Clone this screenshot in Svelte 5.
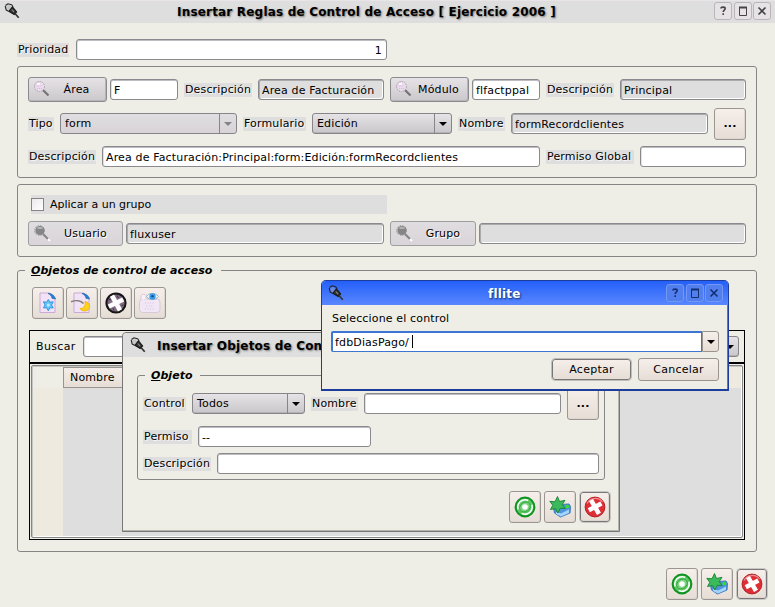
<script>
  const tools = ['new', 'edit', 'lens', 'view'];
  const actions = ['accept', 'next', 'cancel'];
</script>

{#snippet mag(off)}
  <svg class="mag" width="18" height="18" viewBox="0 0 18 18">
    {#if off}
      <path d="M11 11l5 5" stroke="#fff" stroke-width="2" transform="translate(1 1)" />
      <path d="M10 10l5 5" stroke="#858585" stroke-width="2.2" />
      <circle cx="7" cy="6.5" r="4.6" fill="#858585" /><circle cx="6.5" cy="6.5" r="4.8" fill="none" stroke="#8d8d8d" stroke-dasharray="1.5 1" />
      <path d="M4.5 4h5" stroke="#ddd" />
    {:else}
      <path d="M10 10l5.5 5.5" stroke="#77727a" stroke-width="2.2" />
      <circle cx="6.5" cy="6.5" r="5" fill="#eadcec" stroke="#aaa2ad" stroke-dasharray="1.5 .8" />
      <path d="M3.5 6h6M4 8.5h5" stroke="#dfafe2" stroke-dasharray="1 1" /><path d="M4 4h3" stroke="#fff" stroke-width="1.5" />
    {/if}
  </svg>
{/snippet}

{#snippet plug()}
  <svg class="plug" width="16" height="17" viewBox="0 0 16 17">
    <path d="M1.5 2.5L4 .8l3.5 1M1.2 3l1 4M2 7l2.6 1.2M7.5 1.5l1.6 2.2" fill="none" stroke="#222" stroke-width="1.1" />
    <path d="M2.5 2.8l3-.8L8 4.6 4.4 7.4 2.6 6z" fill="#aaa" fill-opacity=".45" />
    <path d="M8.400 4l4.100 5-2.300 2.400L5 8.400z" fill="#3a3a3a" stroke="#1c1c1c" stroke-width="1.300" />
    <path d="M8 6.500l2 2.500" stroke="#999" /><path d="M11 10.5l3.700 4.200" stroke="#333" stroke-width="1.700" />
  </svg>
{/snippet}

{#snippet wb(kind)}
  <span class="wb">
    <svg width="18" height="18" viewBox="0 0 18 18" fill="none" stroke="currentColor">
      {#if kind === 'max'}<path d="M5.5 6v7.5h7V6" /><path d="M5 5.5h8" stroke-width="2" />
      {:else if kind === 'x'}<path d="M5.500 5.500l7 7M12.500 5.500l-7 7" stroke-width="1.6" />
      {:else}<path d="M7 6.600c0-2 4.200-2 4.200 0 0 1.500-2 1.400-2 3.400M9.200 11.300v1.800" stroke-width="1.600" />{/if}
    </svg>
  </span>
{/snippet}

{#snippet combo(text, w, cls)}
  <div class="combo {cls}" style="width:{w}px"><span>{text}</span><i><b></b></i></div>
{/snippet}

{#snippet icon(k)}
  <svg width="22" height="22" viewBox="0 0 22 22">
    {#if k === 'accept'}
      <circle cx="11" cy="11" r="9.400" fill="#5cc763" stroke="#0f9220" stroke-width="2" />
      <circle cx="11" cy="11" r="7.200" fill="none" stroke="#fff" stroke-width="1.500" stroke-dasharray="17 5.600" transform="rotate(160 11 11)" />
      <ellipse cx="11" cy="11" rx="5.600" ry="4.500" fill="#7fd285" stroke="#27a334" stroke-width=".8" transform="rotate(-35 11 11)" />
      <circle cx="11" cy="11" r="2.800" fill="#fff" />
    {:else if k === 'next'}
      <path d="M4.500 12l6.500-3.500 9-.500 1.500 2.500-.500 6.500-9.500 4-6-4z" fill="#4f93dc" stroke="#3f78bb" />
      <path d="M7 16l5 1.500 8-4v3.500l-8 3.500-5-2.500z" fill="#a5d5fa" />
      <path d="M8.500.500l2 5 5.500-1.200-2.800 4.300 3 4-5-.3-2.400 4.700-2.300-4.400-5 .900 2.300-4.200L.800 5.300l5.200.500z" fill="#3aba5b" stroke="#168332" stroke-width=".9" />
      <circle cx="18.300" cy="10.500" r="1.700" fill="#35e31a" />
    {:else if k === 'cancel'}
      <circle cx="11" cy="11" r="9.900" fill="#df2f36" stroke="#b01f26" />
      <path d="M3 7.500a9 8.500 0 0 1 15.500-1.500" stroke="#f28d8f" stroke-width="1.200" fill="none" />
      <path d="M7 4.200l8 13.600M4.800 14.200l12.600-6.800" stroke="#fff" stroke-width="4.600" />
    {:else if k === 'lens'}
      <circle cx="11" cy="11" r="9.600" fill="#806c82" stroke="#151515" stroke-width="2" />
      <path d="M7 3.700l8 14.600M3.800 14.500l14.400-7" stroke="#fff" stroke-width="4.600" />
      <path d="M3.500 8l2.500-1M12 3.500l1.500 2.500M18.500 13l-2 .500M9 18.500l-1-2" stroke="#40303f" />
    {:else if k === 'view'}
      <rect x=".500" y="7" width="20.500" height="13.500" rx="3" fill="#f1e6f4" stroke="#d9c8dc" />
      <path d="M2 8V3.500C2 2 7 2 7 3.500V7" fill="#f8f1f9" stroke="#d9c8dc" />
      <path d="M6 11h9M7 14h8M6 17h9" stroke="#d9bfe0" stroke-dasharray="1 1.500" />
      <path d="M7.500 4.500c2-4 9-4 12 0-3 4-9 4-12 0z" fill="#eef8ff" stroke="#98aebd" />
      <circle cx="13.500" cy="4.500" r="3.200" fill="#3a9de8" /><circle cx="13.500" cy="4.300" r="1.200" fill="#17508b" />
    {:else}
      <path d="M3 1h10l5 5v14.500H3z" fill="#f1e2f6" stroke="#caa9d6" />
      <path d="M11 1.500c4 0 6.500 2 7.500 5.500l-3.500-.700c-.500-2.500-1.800-4-4-4.800z" fill="#2382dc" stroke="#2263a6" stroke-width=".7" />
      {#if k === 'new'}
        <path d="M11.300 7.500l1.600 2.700 3.300-.400-1.700 3.200 1.700 2.900-3.300-.100-1.600 3-1.600-3-3.300.1L8.100 13 6.400 9.800l3.300.4z" fill="#61c5f8" stroke="#3397e0" /><circle cx="11.300" cy="13" r="1.500" fill="#bfeaff" />
      {:else}
        <path d="M0 9.800c5-2 10-1 12.500 1.700" fill="none" stroke="#83807c" stroke-width="1.600" />
        <path d="M14 9.500c6 1 6 9 0 9.500-2.500 0-4-.800-5-2.500 3 .500 6-2 5-7z" fill="#ffd21c" stroke="#f1b912" />
      {/if}
    {/if}
  </svg>
{/snippet}

<main>
  <header class="bar main-bar">{@render plug()}<h1 class="t-main">Insertar Reglas de Control de Acceso [ Ejercicio 2006 ]</h1>
    <div class="wbs">{@render wb('?')}{@render wb('max')}{@render wb('x')}</div>
  </header>

  <div class="row prio"><label style="width:52px">Prioridad</label><div class="in right" style="width:311px">1</div></div>

  <section class="box b1">
    <div class="row r1">
      <button class="pick" style="width:79px">{@render mag(false)}<span>Área</span></button>
      <div class="in near" style="width:68px">F</div>
      <label style="width:68px">Descripción</label>
      <div class="in ro" style="width:126px">Area de Facturación</div>
      <button class="pick" style="width:79px">{@render mag(false)}<span>Módulo</span></button>
      <div class="in near" style="width:68px">flfactppal</div>
      <label style="width:68px">Descripción</label>
      <div class="in ro" style="width:126px">Principal</div>
    </div>
    <div class="row r2">
      <label style="width:26px">Tipo</label>{@render combo('form', 177, 'dis')}
      <label style="width:63px">Formulario</label>{@render combo('Edición', 140, '')}
      <label style="width:47px">Nombre</label><div class="in ro" style="width:197px">formRecordclientes</div>
      <button class="sq">...</button>
    </div>
    <div class="row r3">
      <label style="width:68px">Descripción</label><div class="in" style="width:438px">Area de Facturación:Principal:form:Edición:formRecordclientes</div>
      <label style="width:88px">Permiso Global</label><div class="in" style="width:106px"></div>
    </div>
  </section>

  <section class="box b2">
    <div class="check"><i></i><span>Aplicar a un grupo</span></div>
    <div class="row r4">
      <button class="pick off" style="width:95px">{@render mag(true)}<span>Usuario</span></button>
      <div class="in ro near" style="width:258px">fluxuser</div>
      <button class="pick off" style="width:86px">{@render mag(true)}<span>Grupo</span></button>
      <div class="in ro near" style="width:267px"></div>
    </div>
  </section>

  <section class="box b3">
    <h2 style="width:196px"><u>O</u>bjetos de control de acceso</h2>
    <div class="tools">{#each tools as t}<button class="sq">{@render icon(t)}</button>{/each}</div>
    <div class="frame">
      <div class="search"><span>Buscar</span><div class="in"></div>{@render combo('', 60, '')}</div>
      <div class="table">
        <div class="thead"><span></span><b>Nombre</b></div>
        <div class="tbody"></div>
      </div>
    </div>
  </section>

  <footer class="acts">{#each actions as a}<button class="sq {a}">{@render icon(a)}</button>{/each}</footer>

  <div class="win w2">
    <header class="bar">{@render plug()}<h1 class="t-sub">Insertar Objetos de Con</h1></header>
    <section class="box b4">
      <h2 style="width:55px"><u>O</u>bjeto</h2>
      <div class="row s1">
        <label style="width:43px">Control</label>{@render combo('Todos', 113, '')}
        <label style="width:47px">Nombre</label><div class="in" style="width:197px"></div><button class="sq">...</button>
      </div>
      <div class="row s2"><label style="width:49px">Permiso</label><div class="in" style="width:173px">--</div></div>
      <div class="row s3"><label style="width:68px">Descripción</label><div class="in" style="width:382px"></div></div>
    </section>
    <footer class="acts">{#each actions as a}<button class="sq {a}">{@render icon(a)}</button>{/each}</footer>
  </div>

  <div class="win w3">
    <header class="bar blue">{@render plug()}<h1 class="t-dlg">fllite</h1>
      <div class="wbs">{@render wb('?')}{@render wb('max')}{@render wb('x')}</div>
    </header>
    <p>Seleccione el control</p>
    <div class="edit"><div class="in focus">fdbDiasPago/<s></s></div><i><b></b></i></div>
    <div class="btns"><button class="ok">Aceptar</button><button class="no">Cancelar</button></div>
  </div>
</main>

<style>
  :global(body) { margin: 0; background: #eeeee6; }
  main, main * { box-sizing: border-box; }
  main { position: relative; width: 775px; height: 607px; overflow: hidden; background: #eeeee6; color: #000; font: 11px/14px "DejaVu Sans", sans-serif; letter-spacing: .15px; }
  button { font: inherit; letter-spacing: inherit; color: #000; padding: 0; margin: 0; border: 1px solid #8b8685; border-radius: 3px; flex: none; }
  svg { display: block; flex: none; }
  .bar { display: flex; align-items: flex-start; height: 23px; background: #dedede; }
  .bar h1 { margin: 0; font-size: 12px; line-height: 16px; font-weight: bold; white-space: nowrap; letter-spacing: .19px; text-shadow: 1px 1px 2px #777; }
  .main-bar { border-top: 1px solid #e9e4e7; padding: 1px 4px 0 4px; }
  .main-bar .t-main { margin: 2px 0 0 157px; }
  .main-bar .plug { margin-top: 1px; }
  .wbs { display: flex; gap: 2px; margin-left: auto; }
  .wb { width: 18px; height: 18px; border: 1px solid #b9b5b9; border-radius: 3px; background: #e7e2e6; color: #444; display: flex; align-items: center; justify-content: center; }
  .wb:last-child { margin-left: -1px; }
  .wb svg { margin: -1px; }
  .row { display: flex; gap: 6px; align-items: center; }
  label { flex: none; height: 14px; background: #dedede; padding-left: 1px; white-space: nowrap; text-shadow: 1px 1px 0 #f6f6f6; }
  .in { flex: none; height: 21px; border: 1px solid #8a8a8e; border-radius: 3px; background: #fff; padding: 3px 3px 0; line-height: 15px; white-space: nowrap; overflow: hidden; box-shadow: inset 0 1px #bdbdc1, inset 1px 0 #e2e2e4; }
  .in.ro { background: #dedede; box-shadow: inset 0 1px #aaaaad, inset 1px 0 #aaaaad, inset -1px -1px #fff; }
  .in.right { text-align: right; padding-right: 4px; }
  .near { margin-left: -3px; }
  .pick { height: 25px; display: flex; align-items: center; background: linear-gradient(#e6e2e6, #cbc8cb); border-color: #8b8a8e; box-shadow: inset -1px -1px #b7b4b8; }
  .pick span { flex: 1; text-align: center; margin-left: -4px; }
  .pick.off span { margin-left: -2px; }
  .mag { margin-left: 4px; margin-top: -1px; }
  .pick.off { background: linear-gradient(#e0dde0, #d9d4d8); border-color: #a09da1; box-shadow: none; text-shadow: 1px 1px #fff; }
  .combo { flex: none; height: 21px; border: 1px solid #88858a; border-radius: 3px; background: linear-gradient(#e6e3e6, #cac7ca); display: flex; box-shadow: inset 0 -1px #b5b2b5; }
  .combo span { flex: 1; padding: 3px 0 0 4px; line-height: 13px; }
  .combo i { width: 17px; border-left: 1px solid #88858a; display: flex; align-items: center; justify-content: center; }
  .combo b, .edit i b { border: 4px solid transparent; border-top-color: #000; border-bottom: 0; }
  .combo.dis { background: linear-gradient(#e1dee1, #d7d3d7); box-shadow: none; }
  .combo.dis b { border-top-color: #858388; }
  .sq { width: 32px; height: 32px; display: flex; align-items: center; justify-content: center; background: linear-gradient(#f5eeea, #e6ded5); font-weight: bold; border-color: #9b9692; box-shadow: inset -1px -1px #ddd5cf; }
  .prio { margin: 16px 0 0 17px; height: 21px; gap: 7px; }
  .box { border: 1px solid #858585; border-radius: 3px; }
  .b1 { margin: 6px 18px 0 17px; height: 112px; padding: 10px 10px 0; }
  .r1 { height: 25px; }
  .r2 { margin-top: 6px; height: 32px; }
  .r2 label, .r2 .combo, .r2 .in { margin-top: -1px; }
  .r3 { margin-top: 6px; height: 21px; }
  .b2 { margin: 6px 18px 0 17px; height: 73px; padding: 10px 10px 0; }
  .check { width: 356px; height: 19px; margin-left: 3px; background: #dedede; display: flex; align-items: center; }
  .check i { width: 13px; height: 13px; border: 1px solid #858585; background: linear-gradient(135deg, #ede8ed, #fff); }
  .check span { margin-left: 6px; letter-spacing: 0; }
  .r4 { margin-top: 7px; height: 25px; }
  .b3 { margin: 13px 18px 0 17px; height: 282px; }
  h2 { margin: -8px 0 0 7px; padding-left: 6px; height: 16px; line-height: 15px; font-size: 11px; font-style: italic; background: #eeeee6; white-space: nowrap; letter-spacing: .06px; }
  .tools { display: flex; gap: 2px; margin: 8px 0 0 14px; }
  .frame { margin: 11px 11px 0; height: 210px; border: 1px solid #000; }
  .search { height: 33px; border-bottom: 2px solid #000; display: flex; align-items: center; padding: 0 5px 0 6px; letter-spacing: .35px; }
  .search .in { flex: 1; margin-left: 7px; }
  .table { margin: 1px; height: 173px; border: 1px solid #858585; border-radius: 2px; box-shadow: inset 1px 1px #c5c5c1, inset -1px -1px #fff; display: flex; flex-direction: column; padding: 1px 1px 1px 1px; }
  .thead { height: 21px; display: flex; background: #eeeadf; }
  .thead span { width: 30px; background: #eeeee6; }
  .thead b { width: 200px; font-weight: normal; border: 1px solid #999490; padding: 3px 6px; background: linear-gradient(#f3ece8, #e6ded5); }
  .tbody { flex: 1; background: linear-gradient(90deg, #eeeadf 30px, #dedede 30px); }
  .acts { display: flex; gap: 3px; justify-content: flex-end; padding-right: 8px; align-items: center; margin-top: 16px; }
  .cancel { width: 30px; height: 30px; margin-left: 1px; outline: 1px solid #cbc8c3; border-color: #77777a; }
  .win { position: absolute; background: #eeeee6; }
  .w2 { left: 122px; top: 332px; width: 498px; height: 200px; border: 1px solid #777777; border-radius: 4px 4px 0 0; box-shadow: inset -1px -1px #b4b6aa; }
  .w2 .bar { height: 24px; padding: 4px 0 0 7px; border-radius: 4px 4px 0 0; }
  .t-sub { padding: 1px 0 0 11px; }
  .b4 { margin: 18px 14px 0; height: 105px; padding: 0 5px; }
  .b4 h2 { margin-left: 2px; }
  .s1 { height: 32px; margin-top: 4px; }
  .s1 label, .s1 .combo, .s1 .in { margin-top: -1px; }
  .s2 { margin-top: 6px; }
  .s3 { margin-top: 6px; }
  .w2 .acts { margin-top: 11px; padding-right: 9px; }
  .w3 { left: 321px; top: 280px; width: 408px; height: 111px; border: 1px solid #1c3d9c; border-bottom-width: 2px; border-radius: 5px 5px 0 0; box-shadow: inset -1px 0 #5577cc; }
  .blue { height: 24px; background: linear-gradient(#2460f8, #5987ff); padding: 3px 5px 0 6px; border-radius: 4px 4px 0 0; }
  .blue .plug { margin-top: 1px; }
  .bar.blue h1 { color: #fff; margin: 2px 0 0 144px; text-shadow: 1px 1px 2px #112866; }
  .blue .wb { background: #527fee; border-color: #7398f4; color: #142e72; }
  .w3 p { margin: 7px 0 0 10px; }
  .edit { display: flex; margin: 5px 9px 0 9px; height: 21px; }
  .focus { flex: 1; border: 1px solid #3d75d2; border-width: 2px 1px 1px 2px; box-shadow: none; border-radius: 2px 0 0 2px; padding: 2px 2px 0; }
  .focus s { display: inline-block; width: 1px; height: 13px; background: #000; margin-left: 3px; vertical-align: -2px; }
  .edit i { width: 17px; border: 1px solid #999490; border-radius: 0 3px 3px 0; background: linear-gradient(#f5eeea, #e6ded5); display: flex; align-items: center; justify-content: center; }
  .btns { display: flex; gap: 7px; justify-content: flex-end; align-items: center; padding-right: 9px; margin-top: 6px; height: 23px; letter-spacing: .25px; }
  .btns button { background: linear-gradient(#f5eeea, #e6ded5); width: 81px; height: 23px; border-color: #999490; }
  .btns .ok { width: 79px; height: 21px; border-color: #77777a; outline: 1px solid #c0bcb8; }
</style>
